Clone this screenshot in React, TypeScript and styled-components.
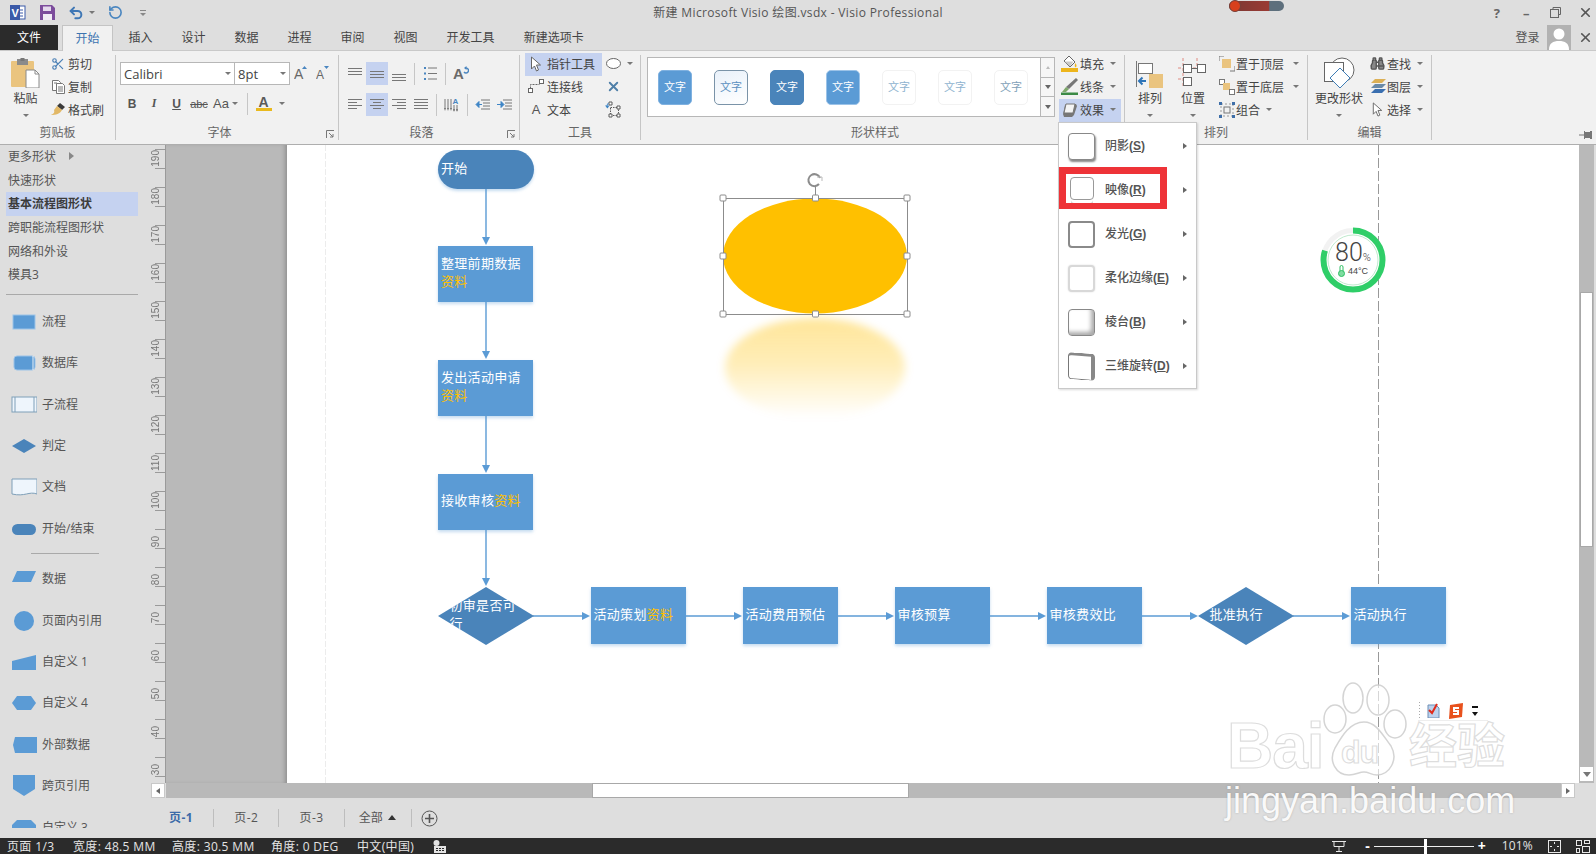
import React from 'react';
import styled, { createGlobalStyle } from 'styled-components';
import { Undo2, RotateCcw, Scissors, Binoculars, X } from 'lucide-react';

const CHROME = '#dedede';
const RIBBON = '#f1f1f1';
const DARK = '#2b2b2b';
const GRAY = '#b9b9b9';
const HILITE = '#c5d2f0';
const TEXT = '#444';
const BLUE = '#5b9bd5';
const DEEP = '#4a84ba';

const GlobalStyle = createGlobalStyle`
  html, body { margin: 0; padding: 0; background: ${CHROME}; }
  body {
    width: 1596px;
    height: 854px;
    overflow: hidden;
    font-family: "Open Sans", "Noto Sans CJK SC", sans-serif;
    font-size: 12px;
    color: ${TEXT};
  }
`;

const Window = styled.div`
  position: relative;
  width: 1596px;
  height: 854px;
  display: flex;
  flex-direction: column;
  overflow: hidden;
  background: ${CHROME};
`;

/* title bar */
const TitleBar = styled.div`
  height: 25px;
  flex: none;
  display: grid;
  grid-template-columns: 1fr auto 1fr;
  align-items: center;
`;
const Quick = styled.div`
  display: flex;
  align-items: center;
  padding-left: 10px;
  svg { flex: none; }
`;
const QuickSlot = styled.span<{ $w: number }>`
  width: ${p => p.$w}px;
  display: flex;
  align-items: center;
`;
const DocTitle = styled.div`
  color: #555;
  font-size: 12px;
  letter-spacing: 0.35px;
  padding-bottom: 2px;
`;
const WinButtons = styled.div`
  display: flex;
  justify-content: flex-end;
  align-items: center;
  margin-right: -4px;
`;
const WinButton = styled.span`
  width: 29.5px;
  display: flex;
  justify-content: center;
  align-items: center;
  color: #666;
  font-weight: 700;
  font-size: 13px;
`;
const Thermo = styled.div`
  position: absolute;
  left: 1229px;
  top: 1px;
  width: 55px;
  height: 10px;
  border-radius: 5px;
  background: linear-gradient(90deg, #7a3a34 0, #9a3a34 72%, #5d6f7c 74%, #5d6f7c 100%);
  &::before {
    content: '';
    position: absolute;
    left: 0;
    top: -1px;
    width: 12px;
    height: 12px;
    border-radius: 50%;
    background: #d8401c;
    border: 1px solid #75403a;
    box-sizing: border-box;
  }
`;

/* tabs */
const TabBar = styled.div`
  height: 25px;
  flex: none;
  display: flex;
  align-items: stretch;
  gap: 2px;
  position: relative;
`;
const FileTab = styled.div`
  width: 58px;
  margin-right: 2px;
  padding-bottom: 2px;
  box-sizing: border-box;
  background: ${DARK};
  color: #fff;
  display: flex;
  align-items: center;
  justify-content: center;
`;
const Tab = styled.div<{ $active?: boolean }>`
  padding: 0 13.5px 2px;
  display: flex;
  align-items: center;
  box-sizing: border-box;
  color: ${p => (p.$active ? '#3d74b0' : TEXT)};
  ${p =>
    p.$active &&
    `background: ${RIBBON};
     border: 1px solid #c4c4c4;
     border-bottom: none;
     padding: 0 12.5px 2px;
     height: 26px;
     z-index: 1;`}
`;
const Account = styled.div`
  margin-left: auto;
  display: flex;
  align-items: center;
  color: #555;
  margin-right: -4px;
`;
const AccountName = styled.span`
  padding-bottom: 2px;
`;
const Avatar = styled.div`
  width: 24px;
  height: 25px;
  margin: 0 0 0 7px;
  background: #b2b2b2;
  overflow: hidden;
`;

/* ribbon */
const Ribbon = styled.div`
  height: 95px;
  flex: none;
  box-sizing: border-box;
  display: flex;
  background: ${RIBBON};
  border-top: 1px solid #c9c9c9;
  border-bottom: 1px solid #aeaeae;
`;
const Group = styled.div<{ $w: number }>`
  width: ${p => p.$w}px;
  flex: none;
  display: flex;
  flex-direction: column;
  box-sizing: border-box;
`;
const GroupBody = styled.div<{ $pad?: number }>`
  height: 71px;
  flex: none;
  padding: 2px 0 0 ${p => p.$pad ?? 0}px;
  display: flex;
  box-sizing: border-box;
`;
const GroupFoot = styled.div`
  flex: 1;
  display: flex;
  align-items: center;
  color: #666;
  padding-bottom: 2px;
`;
const GroupName = styled.div`
  flex: 1;
  text-align: center;
`;
const Launcher = styled.div`
  width: 15px;
  display: flex;
  justify-content: center;
  padding-top: 5px;
`;
const GroupSep = styled.div`
  width: 1px;
  flex: none;
  margin: 4px 0 4px;
  background: #c6c6c6;
`;
const Stack = styled.div<{ $w?: number; $ml?: number }>`
  display: flex;
  flex-direction: column;
  ${p => (p.$w ? `width: ${p.$w}px;` : '')}
  margin-left: ${p => p.$ml ?? 0}px;
`;
const SmallRow = styled.div<{ $active?: boolean }>`
  height: 23px;
  display: flex;
  align-items: center;
  white-space: nowrap;
  padding-bottom: 2px;
  box-sizing: border-box;
  background: ${p => (p.$active ? HILITE : 'transparent')};
`;
const IconSlot = styled.span<{ $w: number }>`
  width: ${p => p.$w}px;
  flex: none;
  display: flex;
  justify-content: center;
  align-items: center;
`;
const Caret = styled.span<{ $ml?: number }>`
  width: 0;
  height: 0;
  margin-left: ${p => p.$ml ?? 6}px;
  border-left: 3px solid transparent;
  border-right: 3px solid transparent;
  border-top: 3px solid #777;
  flex: none;
`;
const BigButton = styled.div<{ $w: number; $ml?: number }>`
  width: ${p => p.$w}px;
  margin-left: ${p => p.$ml ?? 0}px;
  flex: none;
  display: flex;
  flex-direction: column;
  align-items: center;
  white-space: nowrap;
  padding-top: 4px;
`;
const BigIcon = styled.div`
  height: 32px;
  display: flex;
  align-items: center;
  justify-content: center;
`;
const BigLabel = styled.div`
  margin-top: 1px;
  height: 17px;
  line-height: 17px;
`;
const BigCaret = styled.div`
  margin-top: 7px;
  width: 0;
  height: 0;
  border-left: 3px solid transparent;
  border-right: 3px solid transparent;
  border-top: 3px solid #777;
`;

const Combo = styled.div<{ $w: number }>`
  width: ${p => p.$w}px;
  height: 23px;
  box-sizing: border-box;
  background: #fff;
  border: 1px solid #b7b7b7;
  margin-left: -1px;
  padding: 0 3px;
  display: flex;
  align-items: center;
  justify-content: space-between;
  font-size: 13px;
  color: #444;
`;
const FontCol = styled.div`
  padding: 9px 0 0 5px;
  display: flex;
  flex-direction: column;
  gap: 7px;
`;
const ToolLine = styled.div`
  display: flex;
  align-items: center;
  height: 23px;
`;
const TextBtn = styled.span<{ $w: number; $b?: boolean; $i?: boolean; $u?: boolean; $s?: boolean; $size?: number; $serif?: boolean }>`
  width: ${p => p.$w}px;
  flex: none;
  display: flex;
  align-items: center;
  justify-content: center;
  font-family: ${p => (p.$serif ? '"Liberation Serif", serif' : '"Liberation Sans", sans-serif')};
  font-size: ${p => p.$size ?? 12}px;
  font-weight: ${p => (p.$b ? 700 : 400)};
  font-style: ${p => (p.$i ? 'italic' : 'normal')};
  text-decoration: ${p => (p.$u ? 'underline' : p.$s ? 'line-through' : 'none')};
  color: #555;
`;
const MiniSep = styled.span<{ $ml?: number }>`
  width: 1px;
  height: 22px;
  flex: none;
  background: #c6c6c6;
  margin: 0 4px 0 ${p => p.$ml ?? 4}px;
`;
const ParaCol = styled.div`
  padding: 9px 0 0 5px;
  display: flex;
  flex-direction: column;
  gap: 8px;
`;
const ParaBtn = styled.span<{ $on?: boolean }>`
  width: 22px;
  height: 23px;
  flex: none;
  display: flex;
  align-items: center;
  justify-content: center;
  background: ${p => (p.$on ? HILITE : 'transparent')};
`;
const ToolButton = styled.div<{ $active?: boolean }>`
  width: 77px;
  height: 23px;
  padding-bottom: 2px;
  box-sizing: border-box;
  display: flex;
  align-items: center;
  background: ${p => (p.$active ? HILITE : 'transparent')};
`;

/* gallery */
const Gallery = styled.div`
  margin: 4px 0 0 6px;
  height: 60px;
  width: 408px;
  display: flex;
  box-sizing: border-box;
  flex: none;
`;
const GalleryList = styled.div`
  flex: 1;
  background: #fff;
  border: 1px solid #b7b7b7;
  display: flex;
  align-items: center;
  gap: 22px;
  padding-left: 10px;
`;
const Swatch = styled.div<{ $bg: string; $line: string; $fg: string }>`
  width: 34px;
  height: 35px;
  border-radius: 5px;
  box-sizing: border-box;
  background: ${p => p.$bg};
  border: 1px solid ${p => p.$line};
  color: ${p => p.$fg};
  display: flex;
  align-items: center;
  justify-content: center;
  padding-bottom: 2px;
  font-size: 11px;
`;
const GalleryScroll = styled.div`
  width: 14px;
  flex: none;
  display: flex;
  flex-direction: column;
`;
const ScrollCell = styled.div`
  flex: 1;
  box-sizing: border-box;
  border: 1px solid #b7b7b7;
  border-left: none;
  margin-top: -1px;
  background: #f6f6f6;
  display: flex;
  align-items: center;
  justify-content: center;
  &:first-child { margin-top: 0; }
`;
const Triangle = styled.span<{ $dir: 'up' | 'down' | 'right' | 'left'; $c?: string; $s?: number }>`
  width: 0;
  height: 0;
  flex: none;
  ${p => {
    const s = p.$s ?? 3;
    const c = p.$c ?? '#666';
    if (p.$dir === 'up') return `border-left:${s}px solid transparent;border-right:${s}px solid transparent;border-bottom:${s + 1}px solid ${c};`;
    if (p.$dir === 'down') return `border-left:${s}px solid transparent;border-right:${s}px solid transparent;border-top:${s + 1}px solid ${c};`;
    if (p.$dir === 'right') return `border-top:${s}px solid transparent;border-bottom:${s}px solid transparent;border-left:${s + 1}px solid ${c};`;
    return `border-top:${s}px solid transparent;border-bottom:${s}px solid transparent;border-right:${s + 1}px solid ${c};`;
  }}
`;
const PinBox = styled.div`
  flex: 1;
  display: flex;
  align-items: flex-end;
  justify-content: flex-end;
  padding: 0 4px 4px 0;
`;

/* main */
const Main = styled.div`
  flex: 1;
  display: flex;
  min-height: 0;
`;
const Stencil = styled.div`
  width: 148px;
  height: 683px;
  flex: none;
  overflow: hidden;
  padding-left: 6px;
  box-sizing: border-box;
`;
const NavItem = styled.div<{ $on?: boolean }>`
  width: 132px;
  height: 23.7px;
  padding: 0 0 2px 2px;
  box-sizing: border-box;
  display: flex;
  align-items: center;
  gap: 13px;
  color: ${p => (p.$on ? '#3c3c3c' : '#555')};
  font-weight: ${p => (p.$on ? 700 : 400)};
  background: ${p => (p.$on ? HILITE : 'transparent')};
`;
const StencilRule = styled.div<{ $short?: boolean }>`
  height: 1px;
  background: #a9a9a9;
  width: ${p => (p.$short ? 68 : 132)}px;
  margin: ${p => (p.$short ? '4px 0 4px 25px' : '6.5px 0 6.5px')};
`;
const ShapeItem = styled.div`
  height: 41.4px;
  flex: none;
  display: flex;
  align-items: center;
  color: #555;
  white-space: nowrap;
`;
const ShapeName = styled.span`
  padding-bottom: 2px;
`;
const ShapeThumb = styled.svg`
  width: 26px;
  height: 26px;
  margin: 0 5px;
  flex: none;
`;

const Work = styled.div`
  flex: 1;
  display: flex;
  flex-direction: column;
  min-width: 0;
`;
const CanvasRow = styled.div`
  height: 638px;
  flex: none;
  display: flex;
`;
const Ruler = styled.div`
  width: 18px;
  flex: none;
  box-sizing: border-box;
  border-right: 1px solid #9a9a9a;
  overflow: hidden;
`;
const RulerMark = styled.div`
  height: 38px;
  position: relative;
  &:first-child { margin-top: -14px; }
  &::before, &::after {
    content: '';
    position: absolute;
    left: 7px;
    right: 0;
    height: 1px;
    background: #9a9a9a;
  }
  &::before { top: 18px; }
  &::after { bottom: 0; }
`;
const RulerLabel = styled.span`
  position: absolute;
  left: 3px;
  bottom: 2px;
  writing-mode: vertical-rl;
  transform: rotate(180deg);
  font-family: "Liberation Sans", sans-serif;
  font-size: 10px;
  line-height: 10px;
  color: #777;
`;
const Pasteboard = styled.div`
  width: 121px;
  flex: none;
  background: ${GRAY};
  box-shadow: inset -4px 0 4px -2px #8f8f8f;
`;
const Page = styled.div`
  width: 1292px;
  flex: none;
  background: #fff;
  position: relative;
  overflow: hidden;
`;
const Drawing = styled.svg`
  position: absolute;
  left: 0;
  top: 0;
`;
const FlowNode = styled.div<{ $x: number; $y: number; $w: number; $h: number; $kind?: 'rect' | 'pill' | 'diamond' }>`
  position: absolute;
  left: ${p => p.$x - 287}px;
  top: ${p => p.$y - 145}px;
  width: ${p => p.$w}px;
  height: ${p => p.$h}px;
  box-sizing: border-box;
  display: flex;
  align-items: center;
  padding: 0 ${p => (p.$kind === 'diamond' ? 11.5 : 3)}px 4px;
  font-family: "Noto Sans CJK SC", sans-serif;
  font-size: 13px;
  line-height: 18px;
  letter-spacing: 0.3px;
  color: #fff;
  background: ${p => (p.$kind === 'rect' || !p.$kind ? BLUE : DEEP)};
  border-radius: ${p => (p.$kind === 'pill' ? 20 : 0)}px;
  ${p =>
    p.$kind === 'diamond'
      ? 'clip-path: polygon(50% 0, 100% 50%, 50% 100%, 0 50%);'
      : 'box-shadow: 0 2px 3px rgba(91,155,213,0.35);'}
`;
const Gold = styled.span`
  color: #ffc000;
`;

const VScroll = styled.div`
  width: 15px;
  flex: none;
  margin-right: 2px;
  background: ${GRAY};
  display: flex;
  flex-direction: column;
`;
const VThumb = styled.div`
  height: 255px;
  margin: 147px 0 0 1px;
  width: 13px;
  box-sizing: border-box;
  background: #fff;
  border: 1px solid #a8a8a8;
`;
const VEnd = styled.div`
  margin: auto 1px 2px;
  height: 14px;
  background: #fff;
  display: flex;
  align-items: center;
  justify-content: center;
`;
const HScroll = styled.div`
  height: 15px;
  flex: none;
  display: flex;
`;
const HEnd = styled.div<{ $left?: boolean }>`
  width: 14px;
  flex: none;
  margin-left: ${p => (p.$left ? 3 : 0)}px;
  margin-right: ${p => (p.$left ? 1 : 21)}px;
  background: #fff;
  box-sizing: border-box;
  border: 1px solid #c8c8c8;
  display: flex;
  align-items: center;
  justify-content: center;
`;
const HTrack = styled.div`
  flex: 1;
  background: ${GRAY};
  padding-left: 426px;
`;
const HThumb = styled.div`
  width: 317px;
  height: 15px;
  box-sizing: border-box;
  background: #fff;
  border: 1px solid #a8a8a8;
`;
const PageTabs = styled.div`
  height: 40px;
  flex: none;
  display: flex;
  align-items: center;
  gap: 20px;
  padding-left: 21px;
  color: #555;
`;
const PageTab = styled.span<{ $on?: boolean }>`
  font-weight: ${p => (p.$on ? 700 : 400)};
  letter-spacing: 0.5px;
  padding-bottom: 2px;
  color: ${p => (p.$on ? '#3b6aa8' : '#555')};
`;
const PageAll = styled.span`
  display: flex;
  align-items: center;
  gap: 5px;
  margin: 0 -5px 0 -6px;
  padding-bottom: 2px;
`;
const TabSep = styled.span`
  width: 1px;
  height: 18px;
  background: #bdbdbd;
`;
const AddPage = styled.span`
  margin-left: -11px;
  display: flex;
`;

const StatusBar = styled.div`
  height: 16px;
  flex: none;
  background: ${DARK};
  color: #e4e4e4;
  display: flex;
  align-items: center;
  padding: 0 6px 0 7px;
  font-size: 12px;
  white-space: nowrap;
`;
const StatusField = styled.span<{ $w: number }>`
  width: ${p => p.$w}px;
  flex: none;
  letter-spacing: 0.35px;
  padding-bottom: 1px;
`;
const StatusRight = styled.div`
  margin-left: auto;
  display: flex;
  align-items: center;
`;
const Zoom = styled.div`
  width: 100px;
  height: 1px;
  background: #eee;
  position: relative;
  margin: 0 4px;
  &::after {
    content: '';
    position: absolute;
    left: 50px;
    top: -7px;
    width: 3px;
    height: 15px;
    background: #fff;
  }
`;
const ZoomSign = styled.span<{ $ml?: number }>`
  margin-left: ${p => p.$ml ?? 0}px;
  color: #fff;
  font-weight: 700;
  font-size: 14px;
  line-height: 14px;
`;
const ZoomValue = styled.span`
  margin: 0 15px 0 16px;
  letter-spacing: 0.2px;
  padding-bottom: 1px;
`;
const ViewSlot = styled.span`
  margin-left: 15px;
  display: flex;
`;

/* effects menu */
const Menu = styled.div`
  position: absolute;
  left: 1058px;
  top: 122px;
  width: 139px;
  height: 267px;
  box-sizing: border-box;
  padding-top: 1px;
  background: #fff;
  border: 1px solid #c9c9c9;
  box-shadow: 1px 1px 2px rgba(0, 0, 0, 0.15);
`;
const MenuItem = styled.div`
  height: 44px;
  display: flex;
  align-items: center;
  padding-left: 9px;
  color: #555;
  font-weight: 500;
  white-space: nowrap;
`;
const MenuText = styled.span`
  padding-bottom: 2px;
`;
const MenuKey = styled.span`
  font-family: "Liberation Sans", sans-serif;
  font-weight: 700;
`;
const MenuArrow = styled.span`
  position: absolute;
  right: 9px;
  display: flex;
`;
const MenuThumb = styled.div<{ $kind: string }>`
  width: 27px;
  height: 27px;
  flex: none;
  margin-right: 10px;
  box-sizing: border-box;
  border-radius: 4px;
  background: #fff;
  ${p => {
    switch (p.$kind) {
      case 'shadow': return 'border: 1px solid #888; box-shadow: 1px 2px 2px #888;';
      case 'reflect': return 'border: 1px solid #999; height: 23px; width: 24px; margin: -2px 11px 2px 2px; box-shadow: 0 4px 0 -1px #fff, 0 5px 0 -1px #bbb;';
      case 'glow': return 'border: 2px solid #8a8a8a;';
      case 'soft': return 'border: 2px solid #d8d8d8; box-shadow: 0 0 2px #ddd;';
      case 'bevel': return 'border: 1px solid #888; box-shadow: inset -3px -3px 4px #aaa;';
      default: return 'border: 1px solid #777; border-right: 4px solid #888; border-top: 3px solid #888; transform: skewY(4deg);';
    }
  }}
`;
const RedFrame = styled.div`
  position: absolute;
  left: 1059px;
  top: 167px;
  width: 108px;
  height: 42px;
  box-sizing: border-box;
  border: solid #ee3338;
  border-width: 7px 7px 6px 7px;
`;

/* overlays */
const Gauge = styled.div`
  position: absolute;
  left: 1320px;
  top: 227px;
  width: 66px;
  height: 66px;
  text-align: center;
`;
const GaugeText = styled.div`
  position: absolute;
  left: 0;
  right: 0;
  top: 13px;
  font-family: Roboto, sans-serif;
  font-weight: 300;
  font-size: 25px;
  line-height: 26px;
  color: #444;
`;
const GaugePct = styled.span`
  font-size: 11px;
`;
const GaugeTemp = styled.div`
  position: absolute;
  left: 0;
  right: 0;
  top: 38px;
  font-family: "Liberation Sans", sans-serif;
  font-size: 9px;
  line-height: 12px;
  color: #444;
  display: flex;
  justify-content: center;
  align-items: center;
  gap: 3px;
`;
const ImeBar = styled.div`
  position: absolute;
  left: 1418px;
  top: 701px;
  width: 70px;
  height: 20px;
  border-bottom: 1px solid #eee;
  display: flex;
  align-items: center;
  gap: 8px;
  padding-left: 9px;
  box-sizing: border-box;
  background-image: radial-gradient(#aaa 0.7px, transparent 0.8px);
  background-size: 3px 3px;
  background-repeat: repeat-y;
`;
const WaterWord = styled.div<{ $x: number; $y: number; $size: number; $cn?: boolean }>`
  position: absolute;
  left: ${p => p.$x}px;
  top: ${p => p.$y}px;
  font-family: ${p => (p.$cn ? '"Noto Sans CJK SC"' : '"Liberation Sans"')}, sans-serif;
  font-size: ${p => p.$size}px;
  font-weight: 700;
  line-height: 1;
  letter-spacing: ${p => (p.$cn ? 0 : -1)}px;
  white-space: nowrap;
  color: rgba(255, 255, 255, 0.9);
  -webkit-text-stroke: 1.2px rgba(215, 215, 215, 0.85);
`;
const WaterUrl = styled.div`
  position: absolute;
  left: 1225px;
  top: 781px;
  font-family: "Liberation Sans", sans-serif;
  font-size: 36px;
  line-height: 40px;
  white-space: nowrap;
  color: rgba(252, 252, 252, 0.97);
  text-shadow: 0 0 2px rgba(120, 120, 120, 0.45);
`;
const PawMark = styled.svg`
  position: absolute;
  left: 1320px;
  top: 680px;
`;

/* drawings */
const Lines = ({ rows, c = '#777', w = 16, h = 14 }: { rows: [number, number, number][]; c?: string; w?: number; h?: number }) => (
  <svg width={w} height={h} viewBox={`0 0 ${w} ${h}`}>
    {rows.map(([a, b, y], i) => (
      <line key={i} x1={a} x2={b} y1={y + 0.5} y2={y + 0.5} stroke={c} strokeWidth="1" />
    ))}
  </svg>
);
const VisioLogo = () => (
  <svg width="16" height="15" viewBox="0 0 16 15">
    <rect x="7" y="1" width="8" height="13" fill="#fff" stroke="#3b5aa8" />
    <path d="M9 5h4M9 8h4M9 11h4" stroke="#3b5aa8" />
    <rect x="0" y="0" width="10" height="15" fill="#3b5aa8" />
    <text x="1.5" y="12" fontSize="11" fontWeight="700" fill="#fff" fontFamily="Liberation Sans">V</text>
  </svg>
);
const SaveIcon = () => (
  <svg width="15" height="15" viewBox="0 0 15 15">
    <path d="M0 0h12l3 3v12H0z" fill="#7c4c9c" />
    <rect x="3" y="1.5" width="8" height="4.5" fill="#e4d9ec" />
    <rect x="3" y="9" width="9" height="6" fill="#f1ecf5" />
  </svg>
);
const CustomizeIcon = () => (
  <svg width="8" height="10" viewBox="0 0 8 10">
    <path d="M1 2.5h6" stroke="#888" />
    <path d="M1 5h6l-3 3z" fill="#888" />
  </svg>
);
const PasteIcon = () => (
  <svg width="29" height="30" viewBox="0 0 29 30">
    <rect x="0" y="3" width="23" height="26" rx="1" fill="#eac47f" />
    <rect x="6" y="1" width="11" height="6" fill="#8b8b8b" />
    <rect x="9.5" y="0" width="4" height="3" fill="#777" />
    <path d="M15 12h9l4 4v14H15z" fill="#fff" stroke="#8a8a8a" />
    <path d="M24 12v4h4" fill="none" stroke="#8a8a8a" />
  </svg>
);
const CopyIcon = () => (
  <svg width="15" height="15" viewBox="0 0 15 15" fill="#fff" stroke="#777">
    <path d="M1.5 1.5h6l2 2v8h-8z" />
    <path d="M5.5 4.5h6l2 2v8h-8z" />
    <path d="M7 8h5M7 10h5M7 12h5M3 4h3" />
  </svg>
);
const BrushIcon = () => (
  <svg width="16" height="15" viewBox="0 0 16 15">
    <path d="M10 1l5 4-3 3-5-4z" fill="#3a3a3a" />
    <path d="M7 4l5 4c-2 4-6 5-11 5 2-1 4-2 3-5z" fill="#e2b866" />
  </svg>
);
const TitleBoxIcon = () => (
  <svg width="16" height="18" viewBox="0 0 16 18">
    <text x="0" y="14" fontSize="15" fontWeight="700" fill="#6a6a6a" fontFamily="Liberation Sans">A</text>
    <path d="M11 7a2.5 2.5 0 1 0 2-4h-1" fill="none" stroke="#4a86c0" strokeWidth="1.4" />
    <path d="M13.5 1l-2.5 2 2.5 2z" fill="#4a86c0" />
  </svg>
);
const LineSpaceIcon = () => (
  <svg width="16" height="18" viewBox="0 0 16 18">
    <path d="M1 3v10M4 3v10M7 3v10M13 9v6M10 9v6" stroke="#777" />
    <path d="M0 12l1 3 1-3zM3 12l1 3 1-3zM6 12l1 3 1-3zM9 13l1 3 1-3zM12 13l1 3 1-3z" fill="#777" />
    <text x="8.5" y="8" fontSize="8" fontWeight="700" fill="#4a86c0" fontFamily="Liberation Sans">A</text>
  </svg>
);
const IndentIcon = ({ flip }: { flip?: boolean }) => (
  <svg width="16" height="14" viewBox="0 0 16 14">
    <path d="M6 2h9M8 5h7M8 8h7M6 11h9" stroke="#777" />
    {flip ? <path d="M0 6.5h4M4 3.5l3 3-3 3z" stroke="#3e85c6" fill="#3e85c6" /> : <path d="M3 6.5h4M4 3.5l-3 3 3 3z" stroke="#3e85c6" fill="#3e85c6" />}
  </svg>
);
const BulletIcon = () => (
  <svg width="15" height="15" viewBox="0 0 15 15">
    <path d="M1 1h2v2H1zM1 6.5h2v2H1zM1 12h2v2H1z" fill="#4a86c0" />
    <path d="M5 2h9M5 7.5h9M5 13h9" stroke="#777" />
  </svg>
);
const GrowIcon = ({ up }: { up?: boolean }) => (
  <svg width="14" height="18" viewBox="0 0 14 18">
    <text x="0" y="14" fontSize={up ? 14 : 12} fill="#666" fontFamily="Liberation Sans">A</text>
    <path d={up ? 'M8 4l2.5-3L13 4z' : 'M8 1l2.5 3L13 1z'} fill="#4a86c0" />
  </svg>
);
const ColorA = () => (
  <svg width="16" height="18" viewBox="0 0 16 18">
    <text x="2.5" y="12" fontSize="14" fontWeight="700" fill="#5a5a5a" fontFamily="Liberation Sans">A</text>
    <rect x="0" y="13" width="16" height="3" fill="#e9b91d" />
  </svg>
);
const CornerIcon = () => (
  <svg width="9" height="9" viewBox="0 0 9 9" fill="none" stroke="#777">
    <path d="M0.5 8V0.5H8" />
    <path d="M3 3l4 4M7 4v3H4" />
  </svg>
);
const PointerIcon = ({ s = 14 }: { s?: number }) => (
  <svg width={s} height={s + 2} viewBox="0 0 12 16" fill="#fff" stroke="#666">
    <path d="M1.5 1v12l3-3 2 5 2-1-2-5h4z" />
  </svg>
);
const ConnectorIcon = () => (
  <svg width="16" height="15" viewBox="0 0 16 15" fill="#fff" stroke="#666">
    <rect x="0.5" y="9.5" width="4" height="4" />
    <rect x="11.5" y="0.5" width="4" height="4" />
    <path d="M2.5 9.5V5.5H11.5" fill="none" strokeDasharray="2 1" />
  </svg>
);
const CropIcon = () => (
  <svg width="16" height="17" viewBox="0 0 16 17" fill="none" stroke="#5a5a5a">
    <rect x="5.5" y="6.5" width="8" height="8" strokeDasharray="1.5 1" />
    <path d="M4 1h3v3H4zM12 5h3v3h-3zM4 13h3v3H4zM12 13h3v3h-3z" fill="#fff" />
    <path d="M2.5 7c-1-2-.5-3.5 1-5" stroke="#3e85c6" />
    <path d="M0 4.5l2.5 3 2-3z" fill="#3e85c6" stroke="none" />
  </svg>
);
const FillIcon = () => (
  <svg width="17" height="18" viewBox="0 0 17 18">
    <path d="M8 1l6 6-5 5-6-6z" fill="#fff" stroke="#666" />
    <path d="M3.5 6.5h9L9 11.5z" fill="#c9c9c9" />
    <path d="M14.5 8c1 2 1.5 3 .5 4s-2-1-.5-4z" fill="#edb51c" />
    <rect x="0" y="13" width="17" height="4" fill="#edb51c" />
  </svg>
);
const LineIcon = () => (
  <svg width="17" height="17" viewBox="0 0 17 17">
    <path d="M15 0l2 2-9 9-3-2z" fill="#777" />
    <path d="M5 9l3 2-3 3-4 0z" fill="#7ea86a" />
    <rect x="0" y="14.5" width="17" height="2.5" fill="#3c8a45" />
  </svg>
);
const EffectIcon = () => (
  <svg width="16" height="14" viewBox="0 0 16 14">
    <path d="M4 1h10l1 2-3 9-2 2H2L1 11l2-9z" fill="#777" />
    <path d="M4 1h9l-2 9H2z" fill="#f4f4f4" stroke="#777" />
  </svg>
);
const OrderIcon = () => (
  <svg width="28" height="30" viewBox="0 0 28 30">
    <path d="M0.5 3v26" stroke="#777" />
    <rect x="2.5" y="5.5" width="14" height="10" fill="#fff" stroke="#777" />
    <rect x="13" y="16" width="14" height="14" fill="#eac47f" />
    <path d="M10 23H4M6.5 19.5L3 23l3.5 3.5" fill="none" stroke="#2d74b8" strokeWidth="2" />
  </svg>
);
const PositionIcon = () => (
  <svg width="30" height="30" viewBox="0 0 30 30" fill="#fff">
    <path d="M5 0v30M19 0v8M0 10h30M0 21h12" stroke="#e08a80" strokeDasharray="3 2" />
    <rect x="5.5" y="6.5" width="8" height="8" stroke="#666" />
    <rect x="19.5" y="6.5" width="8" height="8" stroke="#666" />
    <rect x="5.5" y="19.5" width="8" height="8" stroke="#666" />
    <path d="M14 10.5h5" stroke="#666" />
  </svg>
);
const LayerIcon = ({ up }: { up?: boolean }) => (
  <svg width="16" height="16" viewBox="0 0 16 16">
    {up ? (
      <>
        <path d="M0 5V0h5M11 15h5v-5" fill="none" stroke="#777" />
        <rect x="3" y="3" width="9" height="9" fill="#eac47f" />
      </>
    ) : (
      <>
        <rect x="0.5" y="0.5" width="5" height="5" fill="#fff" stroke="#777" />
        <rect x="4" y="4" width="7" height="7" fill="#eac47f" />
        <rect x="10.5" y="10.5" width="5" height="5" fill="#fff" stroke="#777" />
      </>
    )}
  </svg>
);
const GroupIcon = () => (
  <svg width="16" height="16" viewBox="0 0 16 16" fill="none">
    <path d="M2 2h12v12H2z" stroke="#999" strokeDasharray="2 2" />
    <rect x="5" y="5" width="6" height="6" stroke="#777" />
    <path d="M0 0h3v3H0zM13 0h3v3h-3zM0 13h3v3H0zM13 13h3v3h-3z" fill="#3e6ea8" />
  </svg>
);
const ChangeShapeIcon = () => (
  <svg width="31" height="32" viewBox="0 0 31 32" fill="#fff" stroke="#666">
    <circle cx="18" cy="13" r="12" />
    <rect x="0.5" y="5.5" width="19" height="19" />
    <path d="M16 11l10 10-10 10-10-10z" stroke="#3f7db5" />
  </svg>
);
const LayersIcon = () => (
  <svg width="16" height="15" viewBox="0 0 16 15">
    <path d="M5 0h11l-4 4H1z" fill="#dcb056" />
    <path d="M5 5h11l-4 4H1z" fill="#6a8aa8" />
    <path d="M5 10h11l-4 4H1z" fill="#3a6fb0" />
  </svg>
);
const StatusMacro = () => (
  <svg width="14" height="13" viewBox="0 0 14 13" fill="#e4e4e4">
    <circle cx="3.5" cy="3" r="3" />
    <rect x="1" y="6" width="12" height="7" />
    <path d="M3 8h2v1H3zM6 8h2v1H6zM9 8h2v1H9zM3 10h2v1H3zM6 10h2v1H6zM9 10h2v1H9z" fill="#2b2b2b" />
  </svg>
);
const PresentIcon = () => (
  <svg width="14" height="12" viewBox="0 0 14 12" fill="none" stroke="#e8e8e8">
    <path d="M0 1.5h14M2 1.5v5h10v-5M7 6.5V12M4 11.5h6" />
  </svg>
);
const FitIcon = () => (
  <svg width="13" height="13" viewBox="0 0 13 13" fill="none" stroke="#e8e8e8">
    <rect x="0.5" y="0.5" width="12" height="12" />
    <path d="M6.5 2v2M6.5 9v2M2 6.5h2M9 6.5h2" />
  </svg>
);
const ViewIcon = () => (
  <svg width="14" height="13" viewBox="0 0 14 13" fill="none" stroke="#e8e8e8">
    <rect x="0.5" y="0.5" width="5" height="5" />
    <rect x="8.5" y="0.5" width="5" height="3" />
    <rect x="0.5" y="8.5" width="3" height="4" />
    <rect x="6.5" y="6.5" width="7" height="6" />
  </svg>
);
const PinIcon = () => (
  <svg width="13" height="10" viewBox="0 0 13 10" fill="#777">
    <path d="M0 4.5h5v1H0zM5 1h1v8H5zM6 2h5v6H6zM11 1h2v8h-2z" />
  </svg>
);

const swatches = [
  { bg: BLUE, line: '#7fb1e0', fg: '#fff' },
  { bg: 'linear-gradient(160deg,#e9f1fa,#fff)', line: '#7a93a8', fg: '#5a8fc0' },
  { bg: '#4a84ba', line: '#4a84ba', fg: '#fff' },
  { bg: BLUE, line: '#9cc3e8', fg: '#fff' },
  { bg: '#fff', line: '#f2f2f2', fg: '#8fb3cf' },
  { bg: '#fff', line: '#f2f2f2', fg: '#8fb3cf' },
  { bg: '#fff', line: '#f2f2f2', fg: '#7f9fb8' },
];

const navItems = ['快速形状', '基本流程图形状', '跨职能流程图形状', '网络和外设', '模具3'];

const shapesA: [string, React.ReactNode][] = [
  ['流程', <rect x="2" y="6" width="22" height="14" fill={BLUE} stroke="#9cc3e8" />],
  ['数据库', <><rect x="3" y="6" width="21" height="14" rx="3" fill={BLUE} stroke="#9cc3e8" /><path d="M22 6v14" stroke="#e8f0f8" /></>],
  ['子流程', <><rect x="1" y="5" width="25" height="15" fill="#eef5fc" stroke="#7e9fb8" /><path d="M4 5v15M23 5v15" stroke="#7e9fb8" /></>],
  ['判定', <path d="M1 13L13 6l12 7-12 7z" fill={DEEP} />],
  ['文档', <path d="M1 5h25v15c-8-3-12 3-25 0z" fill="#eef5fc" stroke="#7e9fb8" />],
  ['开始/结束', <rect x="1" y="8" width="24" height="11" rx="5.5" fill={DEEP} />],
];
const shapesB: [string, React.ReactNode][] = [
  ['数据', <path d="M6 5h19l-5 11H1z" fill={BLUE} />],
  ['页面内引用', <circle cx="13" cy="13" r="10" fill={BLUE} />],
  ['自定义 1', <path d="M1 12L25 6v15H1z" fill={BLUE} />],
  ['自定义 4', <path d="M6 6h14l5 7-5 7H6l-5-7z" fill={BLUE} />],
  ['外部数据', <path d="M4 5h22v16H4l-2-8z" fill={BLUE} />],
  ['跨页引用', <path d="M2 2h22v14l-11 7-11-7z" fill={BLUE} />],
  ['自定义 3', <path d="M6 5h14l5 5v13H1V10z" fill={BLUE} />],
];

const rulerLabels = [190, 180, 170, 160, 150, 140, 130, 120, 110, 100, 90, 80, 70, 60, 50, 40, 30];

const handles: [number, number][] = [
  [723, 198], [815.5, 198], [907, 198],
  [723, 256], [907, 256],
  [723, 314], [815.5, 314], [907, 314],
];

const arrowsDown: [number, number][] = [[189, 245], [302, 359], [416, 473], [530, 586]];
const arrowsRight: [number, number][] = [[533, 590], [685, 742], [837, 894], [989, 1046], [1141, 1198], [1293, 1350]];

const flowRow = [
  { x: 590.5, t: '活动策划', gold: true },
  { x: 742.5, t: '活动费用预估' },
  { x: 894.5, t: '审核预算' },
  { x: 1046.5, t: '审核费效比' },
];

const menuItems = [
  { kind: 'shadow', name: '阴影', key: 'S' },
  { kind: 'reflect', name: '映像', key: 'R' },
  { kind: 'glow', name: '发光', key: 'G' },
  { kind: 'soft', name: '柔化边缘', key: 'E' },
  { kind: 'bevel', name: '棱台', key: 'B' },
  { kind: 'rotate', name: '三维旋转', key: 'D' },
];

const FlowLines = () => (
  <Drawing width="1292" height="638" viewBox="287 145 1292 638">
    <defs>
      <linearGradient id="fade" x1="0" y1="0" x2="0" y2="1">
        <stop offset="0" stopColor="#ffc000" stopOpacity="0.4" />
        <stop offset="0.45" stopColor="#ffc000" stopOpacity="0.28" />
        <stop offset="1" stopColor="#ffc000" stopOpacity="0" />
      </linearGradient>
      <filter id="soft" x="-15%" y="-15%" width="130%" height="130%">
        <feGaussianBlur stdDeviation="4.5" />
      </filter>
    </defs>
    <line x1="325.5" x2="325.5" y1="145" y2="783" stroke="#ececec" strokeDasharray="6 2" />
    <line x1="1378.5" x2="1378.5" y1="145" y2="783" stroke="#999" strokeDasharray="10 3" />
    {arrowsDown.map(([a, b]) => (
      <g key={a}>
        <line x1="486" x2="486" y1={a} y2={b - 6} stroke={BLUE} strokeWidth="1.4" />
        <path d={`M482 ${b - 8}h8l-4 8z`} fill={BLUE} />
      </g>
    ))}
    {arrowsRight.map(([a, b]) => (
      <g key={a}>
        <line x1={a} x2={b - 6} y1="616" y2="616" stroke={BLUE} strokeWidth="1.4" />
        <path d={`M${b - 8} 612v8l8-4z`} fill={BLUE} />
      </g>
    ))}
    <ellipse cx="815" cy="368" rx="90" ry="50" fill="url(#fade)" filter="url(#soft)" />
    <ellipse cx="815" cy="256" rx="92" ry="57.5" fill="#ffc000" />
    <rect x="723.5" y="198.5" width="184" height="116" fill="none" stroke="#8c8c8c" />
    <line x1="815.5" x2="815.5" y1="186" y2="198" stroke="#8c8c8c" />
    <path d="M820 178a6 6 0 1 0-1 6" fill="none" stroke="#8c8c8c" strokeWidth="2" />
    <path d="M817 177l5 0 0 4" fill="none" stroke="#bbb" />
    {handles.map(([x, y]) => (
      <rect key={`${x}-${y}`} x={x - 3} y={y - 3} width="6" height="6" rx="1" fill="#fff" stroke="#8c8c8c" />
    ))}
  </Drawing>
);

const App: React.FC = () => (
  <Window>
    <GlobalStyle />
    <TitleBar>
      <Quick>
        <QuickSlot $w={30}><VisioLogo /></QuickSlot>
        <QuickSlot $w={28}><SaveIcon /></QuickSlot>
        <QuickSlot $w={40}>
          <Undo2 size={16} color="#3f77b5" strokeWidth={3} />
          <Caret $ml={5} />
        </QuickSlot>
        <QuickSlot $w={31}><RotateCcw size={15} color="#4a86c0" strokeWidth={2.6} /></QuickSlot>
        <CustomizeIcon />
      </Quick>
      <DocTitle>新建 Microsoft Visio 绘图.vsdx - Visio Professional</DocTitle>
      <WinButtons>
        <WinButton>?</WinButton>
        <WinButton>–</WinButton>
        <WinButton>
          <svg width="11" height="11" viewBox="0 0 11 11" fill="none" stroke="#666"><path d="M3 2.5V.5h7.5v7H8" /><rect x="0.5" y="2.5" width="8" height="8" /></svg>
        </WinButton>
        <WinButton><X size={15} strokeWidth={2.6} color="#555" /></WinButton>
      </WinButtons>
    </TitleBar>
    <Thermo />
    <TabBar>
      <FileTab>文件</FileTab>
      <Tab $active>开始</Tab>
      <Tab>插入</Tab>
      <Tab>设计</Tab>
      <Tab>数据</Tab>
      <Tab>进程</Tab>
      <Tab>审阅</Tab>
      <Tab>视图</Tab>
      <Tab>开发工具</Tab>
      <Tab>新建选项卡</Tab>
      <Account>
        <AccountName>登录</AccountName>
        <Avatar>
          <svg width="24" height="25" viewBox="0 0 24 25" fill="#fff"><circle cx="12" cy="9" r="5.5" /><path d="M2 25c0-7 4-9 10-9s10 2 10 9z" /></svg>
        </Avatar>
        <WinButton><X size={15} strokeWidth={2.6} color="#555" /></WinButton>
      </Account>
    </TabBar>

    <Ribbon>
      <Group $w={115}>
        <GroupBody $pad={11}>
          <BigButton $w={29}>
            <BigIcon><PasteIcon /></BigIcon>
            <BigLabel>粘贴</BigLabel>
            <BigCaret />
          </BigButton>
          <Stack $ml={8}>
            <SmallRow><IconSlot $w={20}><Scissors size={14} color="#4a7fb5" /></IconSlot>剪切</SmallRow>
            <SmallRow><IconSlot $w={20}><CopyIcon /></IconSlot>复制</SmallRow>
            <SmallRow><IconSlot $w={20}><BrushIcon /></IconSlot>格式刷</SmallRow>
          </Stack>
        </GroupBody>
        <GroupFoot><GroupName>剪贴板</GroupName></GroupFoot>
      </Group>
      <GroupSep />
      <Group $w={222}>
        <GroupBody>
          <FontCol>
            <ToolLine>
              <Combo $w={115}>Calibri<Caret /></Combo>
              <Combo $w={56}>8pt<Caret /></Combo>
              <IconSlot $w={22}><GrowIcon up /></IconSlot>
              <IconSlot $w={22}><GrowIcon /></IconSlot>
            </ToolLine>
            <ToolLine>
              <TextBtn $w={22} $b>B</TextBtn>
              <TextBtn $w={22} $i $b $serif>I</TextBtn>
              <TextBtn $w={23} $u $b>U</TextBtn>
              <TextBtn $w={22} $s $size={11}>abc</TextBtn>
              <TextBtn $w={22} $size={13}>Aa</TextBtn>
              <Caret $ml={0} />
              <MiniSep $ml={9} />
              <IconSlot $w={24}><ColorA /></IconSlot>
              <Caret $ml={3} />
            </ToolLine>
          </FontCol>
        </GroupBody>
        <GroupFoot>
          <GroupName>字体</GroupName>
          <Launcher><CornerIcon /></Launcher>
        </GroupFoot>
      </Group>
      <GroupSep />
      <Group $w={180}>
        <GroupBody>
          <ParaCol>
            <ToolLine>
              <ParaBtn><Lines rows={[[1, 15, 1], [1, 15, 4], [1, 15, 7]]} /></ParaBtn>
              <ParaBtn $on><Lines rows={[[1, 15, 4], [1, 15, 7], [1, 15, 10]]} /></ParaBtn>
              <ParaBtn><Lines rows={[[1, 15, 7], [1, 15, 10], [1, 15, 13]]} /></ParaBtn>
              <MiniSep />
              <ParaBtn><BulletIcon /></ParaBtn>
              <MiniSep />
              <ParaBtn><TitleBoxIcon /></ParaBtn>
            </ToolLine>
            <ToolLine>
              <ParaBtn><Lines rows={[[1, 15, 1], [1, 10, 4], [1, 15, 7], [1, 10, 10]]} /></ParaBtn>
              <ParaBtn $on><Lines rows={[[1, 15, 1], [4, 12, 4], [1, 15, 7], [4, 12, 10]]} /></ParaBtn>
              <ParaBtn><Lines rows={[[1, 15, 1], [6, 15, 4], [1, 15, 7], [6, 15, 10]]} /></ParaBtn>
              <ParaBtn><Lines rows={[[1, 15, 1], [1, 15, 4], [1, 15, 7], [1, 15, 10]]} /></ParaBtn>
              <MiniSep />
              <ParaBtn><LineSpaceIcon /></ParaBtn>
              <MiniSep />
              <ParaBtn><IndentIcon /></ParaBtn>
              <ParaBtn><IndentIcon flip /></ParaBtn>
            </ToolLine>
          </ParaCol>
        </GroupBody>
        <GroupFoot>
          <GroupName>段落</GroupName>
          <Launcher><CornerIcon /></Launcher>
        </GroupFoot>
      </Group>
      <GroupSep />
      <Group $w={120}>
        <GroupBody $pad={5}>
          <Stack>
            <ToolButton $active><IconSlot $w={22}><PointerIcon /></IconSlot>指针工具</ToolButton>
            <ToolButton><IconSlot $w={22}><ConnectorIcon /></IconSlot>连接线</ToolButton>
            <ToolButton><IconSlot $w={22}><TextBtn $w={14} $size={13}>A</TextBtn></IconSlot>文本</ToolButton>
          </Stack>
          <Stack>
            <SmallRow><IconSlot $w={22}><svg width="15" height="11" viewBox="0 0 15 11" fill="#fff" stroke="#666"><ellipse cx="7.5" cy="5.5" rx="7" ry="5" /></svg></IconSlot><Caret $ml={3} /></SmallRow>
            <SmallRow><IconSlot $w={22}><X size={15} strokeWidth={3} color="#4f7fa8" /></IconSlot></SmallRow>
            <SmallRow><IconSlot $w={22}><CropIcon /></IconSlot></SmallRow>
          </Stack>
        </GroupBody>
        <GroupFoot><GroupName>工具</GroupName></GroupFoot>
      </Group>
      <GroupSep />
      <Group $w={483}>
        <GroupBody>
          <Gallery>
            <GalleryList>
              {swatches.map((s, i) => (
                <Swatch key={i} $bg={s.bg} $line={s.line} $fg={s.fg}>文字</Swatch>
              ))}
            </GalleryList>
            <GalleryScroll>
              <ScrollCell><Triangle $dir="up" $c="#bbb" $s={2} /></ScrollCell>
              <ScrollCell><Triangle $dir="down" $s={3} /></ScrollCell>
              <ScrollCell><Triangle $dir="down" $s={3} /></ScrollCell>
            </GalleryScroll>
          </Gallery>
          <Stack $w={62} $ml={4}>
            <SmallRow><IconSlot $w={21}><FillIcon /></IconSlot>填充<Caret /></SmallRow>
            <SmallRow><IconSlot $w={21}><LineIcon /></IconSlot>线条<Caret /></SmallRow>
            <SmallRow $active><IconSlot $w={21}><EffectIcon /></IconSlot>效果<Caret /></SmallRow>
          </Stack>
        </GroupBody>
        <GroupFoot>
          <GroupName>形状样式</GroupName>
          <Launcher />
        </GroupFoot>
      </Group>
      <GroupSep />
      <Group $w={182}>
        <GroupBody $pad={10}>
          <BigButton $w={30}>
            <BigIcon><OrderIcon /></BigIcon>
            <BigLabel>排列</BigLabel>
            <BigCaret />
          </BigButton>
          <BigButton $w={30} $ml={13}>
            <BigIcon><PositionIcon /></BigIcon>
            <BigLabel>位置</BigLabel>
            <BigCaret />
          </BigButton>
          <Stack $ml={9}>
            <SmallRow><IconSlot $w={19}><LayerIcon up /></IconSlot>置于顶层<Caret $ml={9} /></SmallRow>
            <SmallRow><IconSlot $w={19}><LayerIcon /></IconSlot>置于底层<Caret $ml={9} /></SmallRow>
            <SmallRow><IconSlot $w={19}><GroupIcon /></IconSlot>组合<Caret /></SmallRow>
          </Stack>
        </GroupBody>
        <GroupFoot><GroupName>排列</GroupName></GroupFoot>
      </Group>
      <GroupSep />
      <Group $w={123}>
        <GroupBody $pad={7}>
          <BigButton $w={48}>
            <BigIcon><ChangeShapeIcon /></BigIcon>
            <BigLabel>更改形状</BigLabel>
            <BigCaret />
          </BigButton>
          <Stack $ml={5}>
            <SmallRow><IconSlot $w={19}><Binoculars size={15} color="#555" fill="#888" strokeWidth={2.2} /></IconSlot>查找<Caret /></SmallRow>
            <SmallRow><IconSlot $w={19}><LayersIcon /></IconSlot>图层<Caret /></SmallRow>
            <SmallRow><IconSlot $w={19}><PointerIcon s={13} /></IconSlot>选择<Caret /></SmallRow>
          </Stack>
        </GroupBody>
        <GroupFoot><GroupName>编辑</GroupName></GroupFoot>
      </Group>
      <GroupSep />
      <PinBox><PinIcon /></PinBox>
    </Ribbon>

    <Main>
      <Stencil>
        <NavItem>更多形状<Triangle $dir="right" $s={4} $c="#888" /></NavItem>
        {navItems.map((n, i) => (
          <NavItem key={n} $on={i === 1}>{n}</NavItem>
        ))}
        <StencilRule />
        {shapesA.map(([name, art]) => (
          <ShapeItem key={name}>
            <ShapeThumb viewBox="0 0 26 26">{art}</ShapeThumb>
            <ShapeName>{name}</ShapeName>
          </ShapeItem>
        ))}
        <StencilRule $short />
        {shapesB.map(([name, art]) => (
          <ShapeItem key={name}>
            <ShapeThumb viewBox="0 0 26 26">{art}</ShapeThumb>
            <ShapeName>{name}</ShapeName>
          </ShapeItem>
        ))}
      </Stencil>
      <Work>
        <CanvasRow>
          <Ruler>
            {rulerLabels.map(v => (
              <RulerMark key={v}>
                <RulerLabel>{v}</RulerLabel>
              </RulerMark>
            ))}
          </Ruler>
          <Pasteboard />
          <Page>
            <FlowLines />
            <FlowNode $kind="pill" $x={438} $y={150} $w={96} $h={39}>开始</FlowNode>
            <FlowNode $x={438} $y={246} $w={95} $h={56}>
              <div>整理前期数据<br /><Gold>资料</Gold></div>
            </FlowNode>
            <FlowNode $x={438} $y={360} $w={95} $h={56}>
              <div>发出活动申请<br /><Gold>资料</Gold></div>
            </FlowNode>
            <FlowNode $x={438} $y={474} $w={95} $h={56}>
              <div>接收审核<Gold>资料</Gold></div>
            </FlowNode>
            <FlowNode $kind="diamond" $x={438} $y={587} $w={96} $h={58}>初审是否可行</FlowNode>
            {flowRow.map(n => (
              <FlowNode key={n.x} $x={n.x} $y={587} $w={95} $h={57}>
                <div>{n.t}{n.gold && <Gold>资料</Gold>}</div>
              </FlowNode>
            ))}
            <FlowNode $kind="diamond" $x={1198} $y={587} $w={96} $h={58}>批准执行</FlowNode>
            <FlowNode $x={1350.5} $y={587} $w={95} $h={57}>活动执行</FlowNode>
          </Page>
          <VScroll>
            <VThumb />
            <VEnd><Triangle $dir="down" $s={4} $c="#777" /></VEnd>
          </VScroll>
        </CanvasRow>
        <HScroll>
          <HEnd $left><Triangle $dir="left" $s={3} $c="#666" /></HEnd>
          <HTrack><HThumb /></HTrack>
          <HEnd><Triangle $dir="right" $s={3} $c="#666" /></HEnd>
        </HScroll>
        <PageTabs>
          <PageTab $on>页-1</PageTab>
          <TabSep />
          <PageTab>页-2</PageTab>
          <TabSep />
          <PageTab>页-3</PageTab>
          <TabSep />
          <PageAll>全部<Triangle $dir="up" $s={4} $c="#333" /></PageAll>
          <TabSep />
          <AddPage>
            <svg width="17" height="17" viewBox="0 0 17 17" fill="none" stroke="#555"><circle cx="8.5" cy="8.5" r="7.5" /><path d="M8.5 4v9M4 8.5h9" strokeWidth="1.6" /></svg>
          </AddPage>
        </PageTabs>
      </Work>
    </Main>

    <StatusBar>
      <StatusField $w={66}>页面 1/3</StatusField>
      <StatusField $w={99}>宽度: 48.5 MM</StatusField>
      <StatusField $w={99}>高度: 30.5 MM</StatusField>
      <StatusField $w={86}>角度: 0 DEG</StatusField>
      <StatusField $w={76}>中文(中国)</StatusField>
      <StatusMacro />
      <StatusRight>
        <IconSlot $w={22}><PresentIcon /></IconSlot>
        <ZoomSign $ml={15}>-</ZoomSign>
        <Zoom />
        <ZoomSign>+</ZoomSign>
        <ZoomValue>101%</ZoomValue>
        <FitIcon />
        <ViewSlot><ViewIcon /></ViewSlot>
      </StatusRight>
    </StatusBar>

    <Menu>
      {menuItems.map(m => (
        <MenuItem key={m.key}>
          <MenuThumb $kind={m.kind} />
          <MenuText>{m.name}<MenuKey>(<u>{m.key}</u>)</MenuKey></MenuText>
          <MenuArrow><Triangle $dir="right" $s={3} $c="#666" /></MenuArrow>
        </MenuItem>
      ))}
    </Menu>
    <RedFrame />

    <Gauge>
      <svg width="66" height="66" viewBox="0 0 66 66" fill="none">
        <circle cx="33" cy="33" r="32" fill="#fff" />
        <circle cx="33" cy="33" r="29.5" stroke="#f2f2f2" strokeWidth="5" />
        <circle cx="33" cy="33" r="29.5" stroke="#2fce68" strokeWidth="6" strokeDasharray="148.3 185.4" transform="rotate(-90 33 33)" />
        <circle cx="33" cy="33" r="25" stroke="#bfe9cd" strokeWidth="1" />
      </svg>
      <GaugeText>80<GaugePct>%</GaugePct></GaugeText>
      <GaugeTemp>
        <svg width="7" height="12" viewBox="0 0 7 12" fill="none" stroke="#2fbf65"><rect x="2" y="0.5" width="3" height="7" rx="1.5" /><circle cx="3.5" cy="8.5" r="3" fill="#7fdca0" /></svg>
        44°C
      </GaugeTemp>
    </Gauge>

    <ImeBar>
      <svg width="13" height="15" viewBox="0 0 13 15">
        <path d="M1 2h8l3 3v10H1z" fill="#bcd3ee" stroke="#6f8fb5" />
        <path d="M2 7l3 3 5-9" fill="none" stroke="#e02c1c" strokeWidth="2" />
      </svg>
      <svg width="16" height="16" viewBox="0 0 16 16">
        <path d="M2 2l13-2-1 14-13 2z" fill="#e8511d" />
        <path d="M11 5H6v3h4v3H5" fill="none" stroke="#fff" strokeWidth="2" />
      </svg>
      <svg width="6" height="12" viewBox="0 0 6 12">
        <rect y="1" width="6" height="2" fill="#111" />
        <path d="M0 7h6l-3 4z" fill="#111" />
      </svg>
    </ImeBar>

    <WaterWord $x={1227} $y={714} $size={64}>Bai</WaterWord>
    <PawMark width="90" height="100" viewBox="0 0 90 100" fill="rgba(255,255,255,0.6)" stroke="rgba(205,205,205,0.85)" strokeWidth="1.5">
      <ellipse cx="15" cy="39" rx="11" ry="14" />
      <ellipse cx="33" cy="18" rx="10" ry="15" />
      <ellipse cx="58" cy="20" rx="11" ry="15" />
      <ellipse cx="75" cy="44" rx="11" ry="14" />
      <path d="M44 42c12 0 18 12 27 24 8 14-2 29-14 29-6 0-8-3-13-3s-8 3-15 3c-13 0-21-14-14-27 7-12 15-26 29-26z" />
    </PawMark>
    <WaterWord $x={1341} $y={736} $size={32}>du</WaterWord>
    <WaterWord $x={1409} $y={718} $size={48} $cn>经验</WaterWord>
    <WaterUrl>jingyan.baidu.com</WaterUrl>
  </Window>
);

export default App;
